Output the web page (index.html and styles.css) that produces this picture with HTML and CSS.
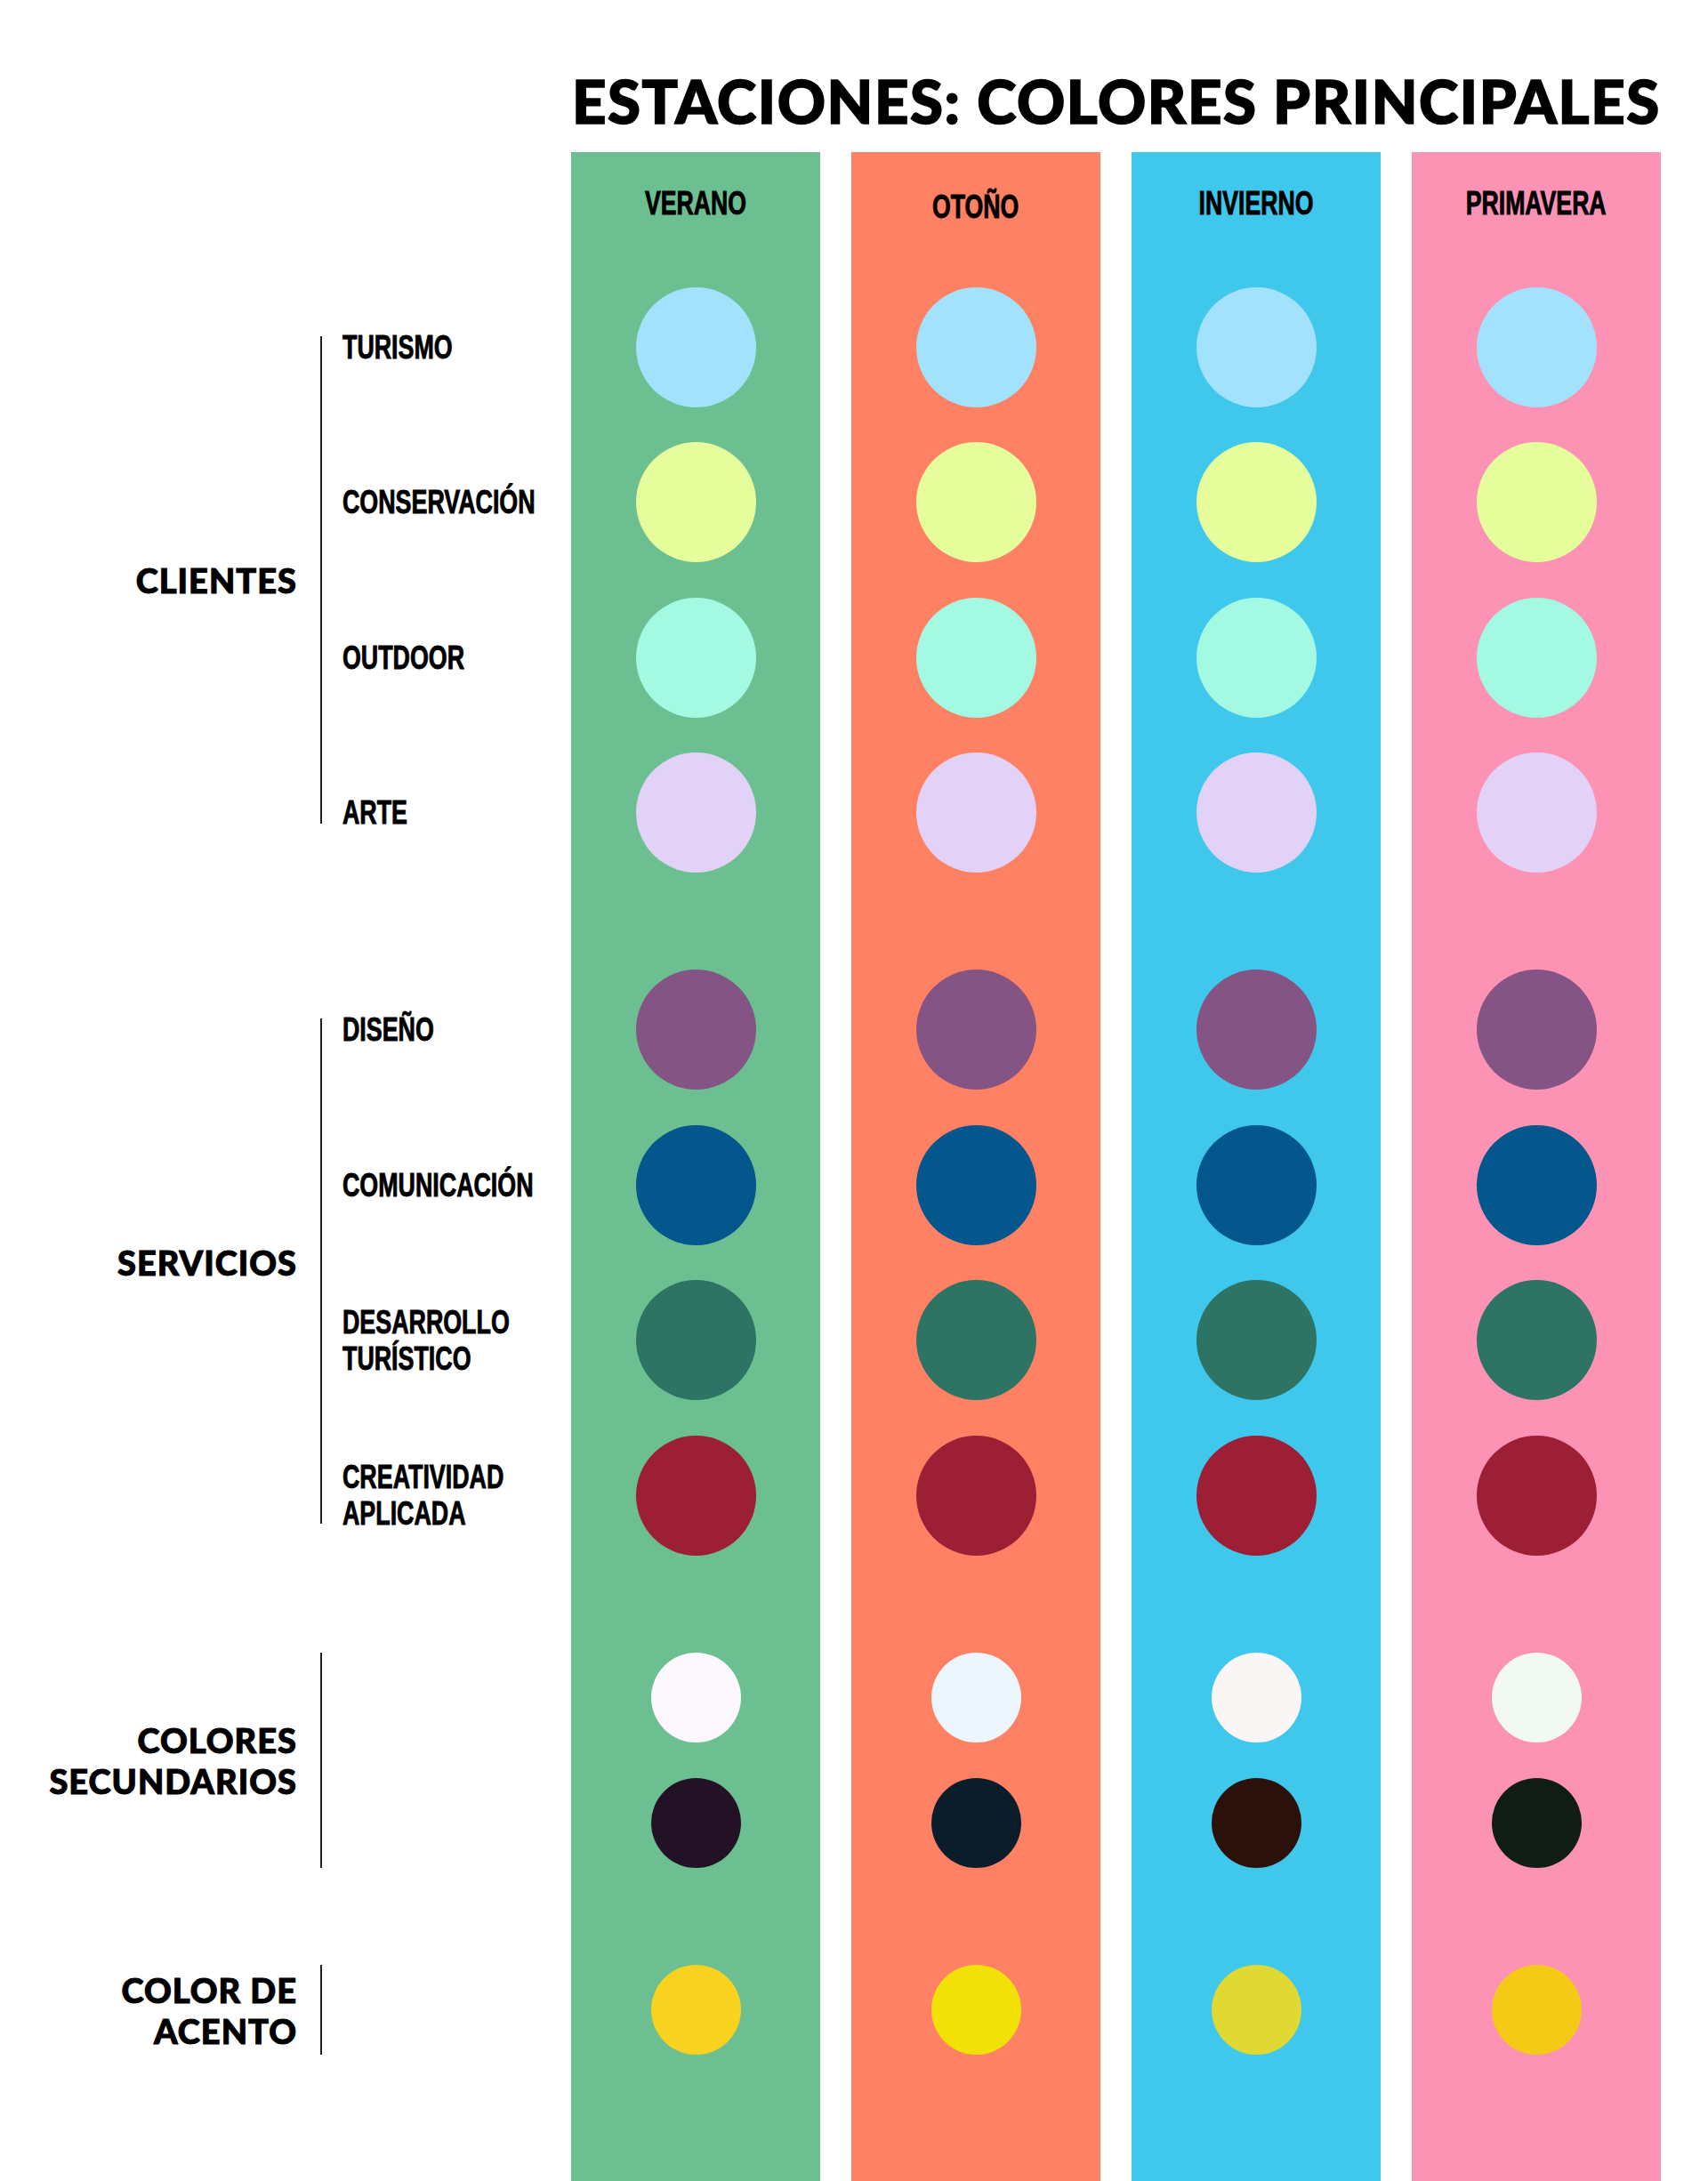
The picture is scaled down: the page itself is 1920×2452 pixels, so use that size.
FILE: index.html
```html
<!DOCTYPE html>
<html lang="es">
<head>
<meta charset="utf-8">
<title>Estaciones: colores principales</title>
<link rel="stylesheet" href="styles.css">
</head>
<body>
<div class="page">
  <header class="top">
    <h1 class="title">ESTACIONES: COLORES PRINCIPALES</h1>
  </header>

  <main class="board">
    <div class="legend">
      <div class="season-head"></div>
      <div class="groups">
        <div class="group g-clientes">
          <div class="group-label">CLIENTES</div>
          <div class="rule"></div>
          <div class="sub-list">
            <div class="slot"><span class="sub-label">TURISMO</span></div>
            <div class="slot"><span class="sub-label">CONSERVACIÓN</span></div>
            <div class="slot"><span class="sub-label">OUTDOOR</span></div>
            <div class="slot"><span class="sub-label">ARTE</span></div>
          </div>
        </div>
        <div class="group g-servicios">
          <div class="group-label">SERVICIOS</div>
          <div class="rule"></div>
          <div class="sub-list">
            <div class="slot"><span class="sub-label">DISEÑO</span></div>
            <div class="slot"><span class="sub-label">COMUNICACIÓN</span></div>
            <div class="slot"><span class="sub-label">DESARROLLO<br>TURÍSTICO</span></div>
            <div class="slot"><span class="sub-label">CREATIVIDAD<br>APLICADA</span></div>
          </div>
        </div>
        <div class="group g-secundarios">
          <div class="group-label">COLORES<br>SECUNDARIOS</div>
          <div class="rule"></div>
          <div class="sub-list"></div>
        </div>
        <div class="group g-acento">
          <div class="group-label">COLOR DE<br>ACENTO</div>
          <div class="rule"></div>
          <div class="sub-list"></div>
        </div>
      </div>
    </div>

    <section class="season verano">
      <div class="season-head"><span class="head-text">VERANO</span></div>
      <div class="groups">
        <div class="swatches">
          <div class="slot"><span class="dot c1"></span></div>
          <div class="slot"><span class="dot c2"></span></div>
          <div class="slot"><span class="dot c3"></span></div>
          <div class="slot"><span class="dot c4"></span></div>
        </div>
        <div class="swatches">
          <div class="slot"><span class="dot c5"></span></div>
          <div class="slot"><span class="dot c6"></span></div>
          <div class="slot"><span class="dot c7"></span></div>
          <div class="slot"><span class="dot c8"></span></div>
        </div>
        <div class="swatches">
          <div class="slot small"><span class="dot small light"></span></div>
          <div class="slot small"><span class="dot small dark"></span></div>
        </div>
        <div class="swatches">
          <div class="slot small"><span class="dot small accent"></span></div>
        </div>
      </div>
    </section>

    <section class="season otono">
      <div class="season-head tilde"><span class="head-text">OTOÑO</span></div>
      <div class="groups">
        <div class="swatches">
          <div class="slot"><span class="dot c1"></span></div>
          <div class="slot"><span class="dot c2"></span></div>
          <div class="slot"><span class="dot c3"></span></div>
          <div class="slot"><span class="dot c4"></span></div>
        </div>
        <div class="swatches">
          <div class="slot"><span class="dot c5"></span></div>
          <div class="slot"><span class="dot c6"></span></div>
          <div class="slot"><span class="dot c7"></span></div>
          <div class="slot"><span class="dot c8"></span></div>
        </div>
        <div class="swatches">
          <div class="slot small"><span class="dot small light"></span></div>
          <div class="slot small"><span class="dot small dark"></span></div>
        </div>
        <div class="swatches">
          <div class="slot small"><span class="dot small accent"></span></div>
        </div>
      </div>
    </section>

    <section class="season invierno">
      <div class="season-head"><span class="head-text">INVIERNO</span></div>
      <div class="groups">
        <div class="swatches">
          <div class="slot"><span class="dot c1"></span></div>
          <div class="slot"><span class="dot c2"></span></div>
          <div class="slot"><span class="dot c3"></span></div>
          <div class="slot"><span class="dot c4"></span></div>
        </div>
        <div class="swatches">
          <div class="slot"><span class="dot c5"></span></div>
          <div class="slot"><span class="dot c6"></span></div>
          <div class="slot"><span class="dot c7"></span></div>
          <div class="slot"><span class="dot c8"></span></div>
        </div>
        <div class="swatches">
          <div class="slot small"><span class="dot small light"></span></div>
          <div class="slot small"><span class="dot small dark"></span></div>
        </div>
        <div class="swatches">
          <div class="slot small"><span class="dot small accent"></span></div>
        </div>
      </div>
    </section>

    <section class="season primavera">
      <div class="season-head"><span class="head-text">PRIMAVERA</span></div>
      <div class="groups">
        <div class="swatches">
          <div class="slot"><span class="dot c1"></span></div>
          <div class="slot"><span class="dot c2"></span></div>
          <div class="slot"><span class="dot c3"></span></div>
          <div class="slot"><span class="dot c4"></span></div>
        </div>
        <div class="swatches">
          <div class="slot"><span class="dot c5"></span></div>
          <div class="slot"><span class="dot c6"></span></div>
          <div class="slot"><span class="dot c7"></span></div>
          <div class="slot"><span class="dot c8"></span></div>
        </div>
        <div class="swatches">
          <div class="slot small"><span class="dot small light"></span></div>
          <div class="slot small"><span class="dot small dark"></span></div>
        </div>
        <div class="swatches">
          <div class="slot small"><span class="dot small accent"></span></div>
        </div>
      </div>
    </section>
  </main>
</div>
</body>
</html>
```

FILE: styles.css
```css
* { box-sizing: border-box; }

html, body {
  margin: 0;
  padding: 0;
  background: #ffffff;
  color: #000000;
}

.page {
  width: 1920px;
  height: 2452px;
  display: flex;
  flex-direction: column;
  overflow: hidden;
}

/* ---------- title ---------- */
.top {
  height: 171px;
  padding: 80px 0 0 643px;
  flex: none;
}

.title {
  margin: 0;
  font-family: "Lato", "Inter", "DejaVu Sans", sans-serif;
  font-weight: 900;
  font-size: 67px;
  line-height: 67px;
  letter-spacing: 1.6px;
  white-space: nowrap;
  color: #000;
  -webkit-text-stroke: 1.6px #000;
}

/* ---------- board ---------- */
.board {
  flex: 1;
  display: grid;
  grid-template-columns: 607px repeat(4, 280px);
  column-gap: 35px;
}

.season, .legend {
  display: flex;
  flex-direction: column;
}

.verano    { background: #6cbf91; }
.otono     { background: #ff8163; }
.invierno  { background: #3fc8eb; }
.primavera { background: #fc93b4; }

.season-head {
  height: 131.75px;
  flex: none;
  padding-top: 40px;
  text-align: center;
  font-family: "Liberation Sans", Arial, sans-serif;
  font-weight: 700;
  font-size: 36px;
  line-height: 35px;
}

.season-head.tilde { padding-top: 44px; }

.head-text {
  display: inline-block;
  transform: scaleX(0.74);
  transform-origin: 50% 50%;
  white-space: nowrap;
  -webkit-text-stroke: 0.9px #000;
}

.groups {
  display: flex;
  flex-direction: column;
  gap: 69.5px;
}

.swatches {
  display: flex;
  flex-direction: column;
}

.slot {
  height: 174.5px;
  display: flex;
  align-items: center;
  justify-content: center;
}

.slot.small { height: 141px; }

.dot {
  display: block;
  width: 135px;
  height: 135px;
  border-radius: 50%;
}

.dot.small {
  width: 101px;
  height: 101px;
}

.c1 { background: #a3e2fd; }
.c2 { background: #e5fd9b; }
.c3 { background: #a3f9e2; }
.c4 { background: #e2d2f8; }
.c5 { background: #845584; }
.c6 { background: #03578c; }
.c7 { background: #2d7465; }
.c8 { background: #9c1f36; }

.verano .light    { background: #fdf8fd; }
.verano .dark     { background: #231126; }
.verano .accent   { background: #f8d21f; }
.otono .light     { background: #eef6fd; }
.otono .dark      { background: #0b1d2a; }
.otono .accent    { background: #f1e106; }
.invierno .light  { background: #faf6f6; }
.invierno .dark   { background: #2c110b; }
.invierno .accent { background: #e0d934; }
.primavera .light { background: #f2f8f4; }
.primavera .dark  { background: #101d17; }
.primavera .accent{ background: #f4ca17; }

/* ---------- legend ---------- */
.group {
  display: flex;
  flex-direction: row;
}

.group-label {
  width: 334px;
  flex: none;
  align-self: center;
  text-align: right;
  font-family: "Lato", "Inter", "DejaVu Sans", sans-serif;
  font-weight: 900;
  font-size: 38px;
  line-height: 46px;
  letter-spacing: 1px;
  margin-right: -1px;
  -webkit-text-stroke: 1px #000;
}

.rule {
  width: 2px;
  flex: none;
  margin: 75px 23px 75px 27px;
  background: #222222;
}

.g-servicios .rule { margin-top: 75px; margin-bottom: 55px; }
.g-secundarios .rule,
.g-acento .rule { margin-top: 20px; margin-bottom: 20px; }

.g-secundarios { height: 282px; }
.g-acento { height: 141px; }

.sub-list {
  flex: 1;
  display: flex;
  flex-direction: column;
}

.sub-list .slot { justify-content: flex-start; }

.sub-label {
  display: inline-block;
  transform: scaleX(0.745);
  transform-origin: 0 50%;
  white-space: nowrap;
  font-family: "Liberation Sans", Arial, sans-serif;
  font-weight: 700;
  font-size: 36px;
  line-height: 41px;
  -webkit-text-stroke: 0.9px #000;
}
```
